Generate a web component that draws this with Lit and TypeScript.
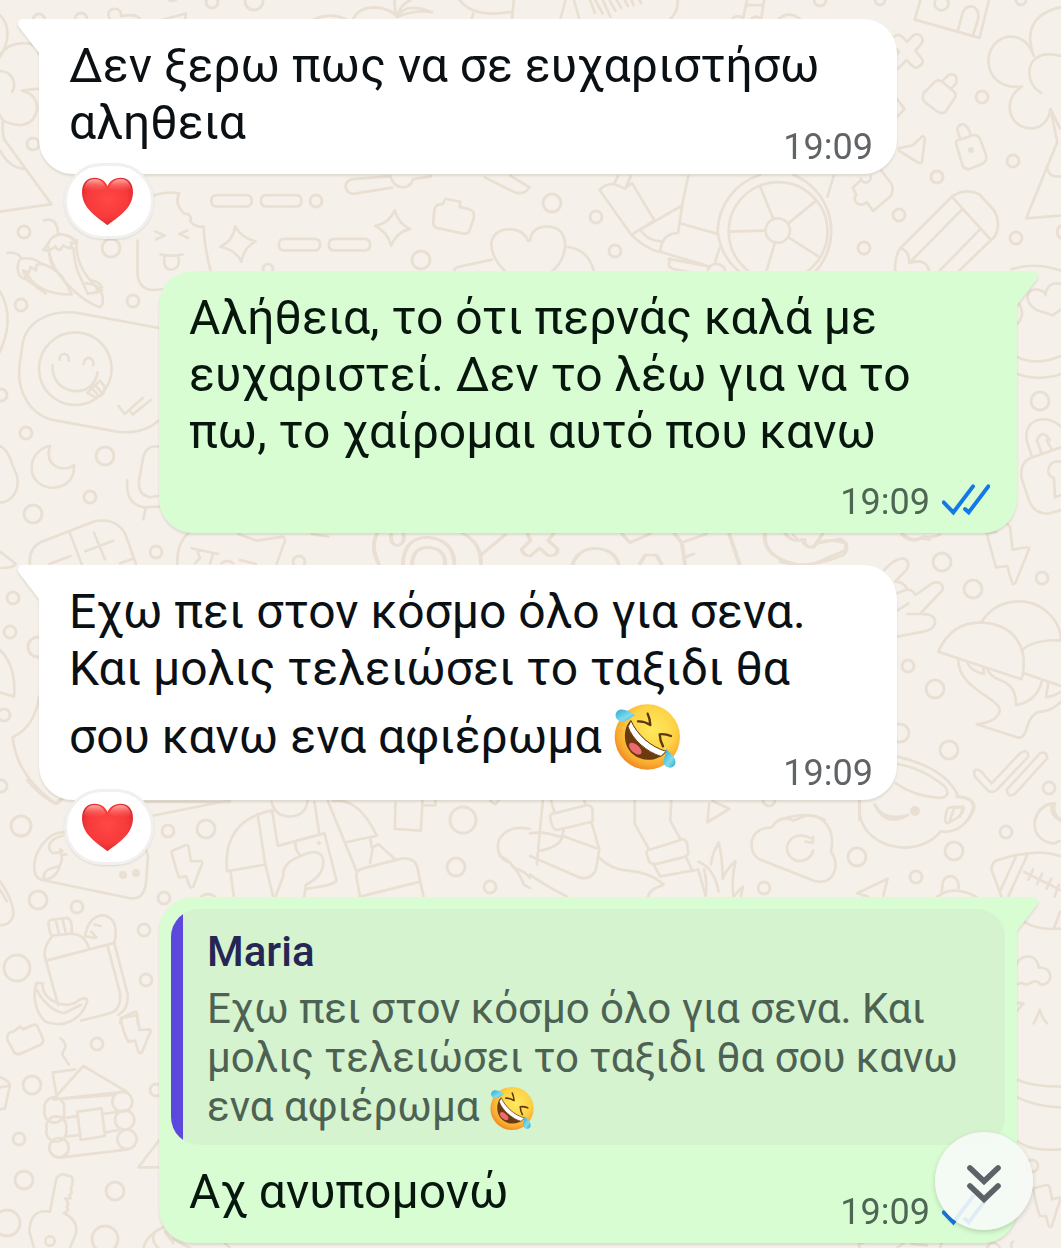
import { LitElement, html, css, svg, nothing } from "lit";
import { customElement, property } from "lit/decorators.js";

interface Quote {
  author: string;
  text: string;
  laughing?: boolean;
}

interface Message {
  own: boolean;
  text: string;
  time: string;
  laughing?: boolean;
  loved?: boolean;
  quote?: Quote;
}

const MESSAGES: Message[] = [
  { own: false, text: "Δεν ξερω πως να σε ευχαριστήσω αληθεια", time: "19:09", loved: true },
  {
    own: true,
    text: "Αλήθεια, το ότι περνάς καλά με ευχαριστεί. Δεν το λέω για να το πω, το χαίρομαι αυτό που κανω",
    time: "19:09",
  },
  {
    own: false,
    text: "Εχω πει στον κόσμο όλο για σενα. Και μολις τελειώσει το ταξιδι θα σου κανω ενα αφιέρωμα",
    laughing: true,
    time: "19:09",
    loved: true,
  },
  {
    own: true,
    text: "Αχ ανυπομονώ",
    time: "19:09",
    quote: {
      author: "Maria",
      text: "Εχω πει στον κόσμο όλο για σενα. Και μολις τελειώσει το ταξιδι θα σου κανω ενα αφιέρωμα",
      laughing: true,
    },
  },
];

/* Small and large rings scattered over the wallpaper: x, y, radius. */
const RINGS: [number, number, number][] = [
  [212, 2, 6], [254, 1, 9], [39, 20, 6], [81, 19, 6], [33, 144, 6], [24, 232, 6], [111, 248, 9],
  [316, 201, 6], [421, 260, 9], [268, 269, 5], [552, 203, 9], [596, 217, 6], [615, 251, 6], [820, 0, 6],
  [880, 0, 5], [1021, 0, 5], [982, 97, 6], [1013, 161, 6], [937, 177, 6], [899, 215, 6], [864, 248, 6],
  [1016, 238, 6], [1064, 232, 7], [21, 305, 6], [133, 301, 6], [1, 395, 6], [26, 433, 6], [105, 456, 9],
  [90, 497, 6], [33, 514, 9], [156, 552, 6], [299, 562, 6], [1040, 401, 9], [942, 562, 9], [973, 589, 9],
  [1042, 578, 6], [908, 666, 6], [935, 689, 9], [900, 733, 9], [949, 750, 9], [1049, 788, 6],
  [13, 598, 6], [10, 632, 6], [38, 647, 10], [4, 715, 6], [1, 786, 6], [21, 826, 10], [168, 831, 6],
  [206, 829, 9], [38, 900, 9], [77, 907, 6], [164, 898, 6], [208, 903, 9], [144, 930, 6], [17, 968, 13],
  [146, 980, 6], [463, 820, 13], [456, 867, 9], [490, 887, 6], [769, 800, 6], [857, 857, 9],
  [954, 851, 9], [764, 888, 6], [916, 877, 6], [1006, 832, 6], [97, 1044, 6], [32, 1085, 9],
  [156, 1090, 6], [19, 1139, 6], [24, 1180, 9], [115, 1191, 9], [7, 1223, 13], [105, 1239, 13],
  [1032, 1166, 6],
];

/* Line drawings, grouped by the patch of wallpaper that they decorate. */
const DOODLES: { at: string; d: string[] }[] = [
  {
    at: "scale(.338)",
    d: [
      "M0 45Q22 65 22 100T0 168M0 160Q30 125 75 128Q112 130 116 160M0 210Q38 212 42 250Q42 265 36 272M65 268L116 262",
      "M65 268Q108 278 110 320Q104 366 60 370Q5 366 0 340M8 360Q6 390 12 412L152 604L0 626M0 445Q26 496 72 500",
      "M325 57Q312 30 338 26Q360 26 358 48Q405 38 415 57M485 57L550 40L548 57M500 0Q510 5 520 0",
      "M930 57Q975 35 1025 57M1045 57Q1060 22 1110 22Q1155 25 1175 50Q1182 15 1215 0M1175 50Q1165 25 1168 0M1175 50Q1200 5 1278 36Q1230 28 1175 50M1360 0Q1400 55 1515 35M1520 0L1515 57M1400 40L1395 57",
      "M625 594Q625 577 642 577H728Q745 577 745 594T728 611H642Q625 611 625 594ZM772 594Q772 577 789 577H875Q892 577 892 594T875 611H789Q772 611 772 594Z",
      "M825 724Q825 707 842 707H930Q947 707 947 724T930 741H842Q825 741 825 724ZM973 724Q973 707 990 707H1078Q1095 707 1095 724T1078 741H990Q973 741 973 724Z",
      "M696 670Q715 705 756 714Q722 732 714 774Q697 738 652 730Q690 712 696 670ZM1168 622Q1178 662 1214 678Q1176 684 1157 726Q1146 686 1110 668Q1150 662 1168 622Z",
      "M1285 620Q1290 602 1310 604L1318 588L1362 597L1360 612L1390 620Q1405 625 1402 645L1390 680Q1386 694 1370 691L1295 675Q1280 672 1282 655Z",
      "M1023 555Q1020 536 1042 530L1155 522Q1165 555 1195 554Q1218 550 1222 530L1275 522M1023 555Q1028 575 1050 573L1160 555M1435 525L1525 570Q1550 575 1562 560M1510 520L1568 555",
      "M455 578Q495 565 530 572Q515 605 545 632Q570 632 563 655Q580 675 602 670Q605 735 625 808M407 712V810Q410 858 455 858L490 855M460 685L487 697L462 708M554 682L530 692L556 704M475 753Q510 760 540 753M486 756V780Q490 798 508 798Q528 795 529 775V756",
      "M130 652Q170 640 172 695Q150 700 143 720L128 740Q150 745 163 728Q170 742 180 738L187 726Q200 735 212 734L210 718L226 720Q215 695 172 692M145 740Q145 790 185 820L212 870M218 735Q220 790 240 825L260 870M22 748Q55 745 62 765Q98 760 122 780L108 784L106 800L90 790L86 806L68 800L80 828Q48 820 53 785Q55 770 62 765M122 780Q160 790 185 820M80 828L135 868M255 838Q290 842 302 860M265 868Q290 865 302 860",
      "M1500 808Q1450 760 1454 718Q1460 680 1508 678Q1550 680 1562 712M1455 768L1355 790Q1335 798 1352 808",
    ],
  },
  {
    at: "translate(530 0) scale(.338)",
    d: [
      "M105 0L90 57M130 0L146 57M178 0L192 38M193 0L215 40M215 0L238 50M235 0L253 32M256 0L270 24M280 0L290 18M300 0L306 15M324 0L329 10M437 0Q440 30 415 57M642 0L630 57M693 0L684 57M638 15H690M598 57Q605 44 626 50M655 55Q668 44 680 55M735 57Q765 30 800 57",
      "M1155 0L1138 58L1330 112L1358 0M1197 10A20 20 0 1 0 1238 10A20 20 0 1 0 1197 10M1265 94L1280 38Q1290 14 1312 20Q1330 30 1326 55L1312 100",
      "M1078 108Q1088 98 1100 108L1116 124L1132 106Q1145 96 1156 106Q1168 118 1156 132L1140 150L1158 172Q1168 184 1154 194Q1142 206 1130 194L1114 178L1090 202M1086 146L1092 152L1086 160",
      "M1165 275L1200 240Q1210 235 1220 242L1255 272Q1264 282 1255 292L1230 330Q1220 338 1208 332L1168 302Q1158 290 1165 275ZM1220 240L1236 224Q1250 214 1260 226Q1266 240 1258 250L1246 262M1084 290L1108 322L1086 346",
      "M1092 438L1132 430L1160 404Q1168 402 1168 412L1160 478Q1155 486 1146 480L1092 446ZM1262 430Q1255 415 1275 412L1310 400Q1325 397 1332 412L1350 462Q1352 480 1335 486L1300 500Q1285 502 1280 490ZM1272 410L1264 382Q1268 366 1284 368Q1298 375 1304 400",
      "M1490 165Q1480 130 1450 114C1400 95 1356 130 1356 184C1360 235 1400 262 1455 256M1455 256Q1405 290 1425 345C1450 395 1530 395 1540 322L1568 380M1490 165Q1450 50 1568 22M1512 275C1470 250 1462 185 1510 165Q1530 155 1568 165M1540 322L1560 420L1468 646L1568 638M1530 490Q1530 525 1568 522",
      "M206 562Q225 542 252 545L280 558L302 542L368 652L300 695ZM250 540L260 522M285 550L298 522M325 680L450 608M468 522L450 608L438 690Q390 690 385 745L520 785M300 695Q350 740 385 745M330 685Q350 712 388 714M448 662L555 692M560 735L548 775M416 765Q402 790 425 796L485 808M410 766L530 788M525 808Q525 785 550 780Q580 785 578 808",
      "M555 684A178 178 0 0 1 680 518M780 518A178 178 0 0 1 840 808M625 808A178 178 0 0 1 555 684M588 685A146 146 0 1 1 880 685A146 146 0 1 1 588 685M697 682A36 36 0 1 1 769 682A36 36 0 1 1 697 682M680 550L720 648M845 595L765 660M588 685L697 682M765 702L855 760M725 716L698 808M898 522L880 582",
      "M978 528Q982 542 998 540Q1010 532 1008 522M1040 505L1070 545Q1080 575 1055 590L1015 624L996 598Q985 610 968 602Q955 590 965 576L955 555L978 534",
      "M1095 735L1248 582Q1290 555 1330 575L1375 625Q1395 665 1375 700L1262 808M1248 582L1362 708M1280 618L1125 775M1330 680L1205 808M1095 735Q1078 760 1080 808M1095 735Q1122 740 1122 778Q1175 760 1182 808",
      "M0 712Q5 672 50 670Q105 672 104 730Q100 775 60 808M104 730Q175 735 190 808",
    ],
  },
  {
    at: "translate(860 0) scale(.3333)",
    d: [
      "M455 808Q525 785 603 812M578 946L530 930C485 905 500 855 545 872Q558 878 556 886C560 855 580 845 603 852M578 946L603 928M472 905Q500 940 472 972M472 1072Q530 1098 603 1068M472 1122Q540 1145 603 1122M500 1320C490 1255 560 1240 603 1280M532 1320Q545 1285 570 1320",
    ],
  },
  {
    at: "translate(0 240) scale(.3333)",
    d: [
      "M478 264L240 220C150 205 80 245 68 310L58 380C50 460 95 530 170 542L350 575Q430 585 478 540M117 386A108 108 0 1 1 335 386A108 108 0 1 1 117 386M178 360Q180 340 195 342Q208 345 206 362M250 372Q255 352 270 354Q282 360 280 376M158 375C150 465 280 485 293 396M262 458L300 422L314 440Q315 470 285 472ZM275 445L292 462M285 436L302 454M356 498L374 522L428 474M392 516L398 524L452 480",
      "M150 618C80 630 70 740 160 744Q225 735 222 675Q205 690 175 683Q135 665 150 618ZM0 155Q40 220 10 310L0 335M0 618Q25 630 35 670L50 705Q60 740 38 770Q20 788 0 788",
      "M475 620Q440 615 430 650L418 715Q410 765 450 772L475 768M382 720Q375 790 430 802L478 800M437 805L430 838M90 972Q85 925 125 905L280 845Q345 830 375 880L408 972M208 875L245 972M256 934L340 902M282 878L315 958M148 972L212 948M360 970L395 958",
      "M145 20Q150 80 200 130Q250 185 300 202Q315 190 305 160L262 110Q225 60 230 0M80 100Q115 165 215 163M270 120Q300 125 306 142L290 150M0 935L48 972Q40 984 0 984",
      "M565 880Q530 910 532 972M715 882L770 902L850 890Q860 900 850 915L830 972M575 925L655 942M590 928L600 955L585 970M640 940L630 970M665 970Q680 955 700 970M720 960L768 972M935 882L985 890",
    ],
  },
  {
    at: "translate(130 520) scale(.51 .333)",
    d: [
      "M485 40Q470 80 488 132M512 42Q510 75 525 77Q540 70 536 42M535 132Q538 50 585 52Q635 60 636 132M553 132Q555 82 585 82Q618 85 618 132M652 40Q690 70 688 132M735 45L690 103M780 42L785 62L768 88Q772 110 785 108L803 84L820 107Q840 110 838 86L820 62L830 42M868 132Q880 85 912 85Q950 88 958 132M965 42L980 68L1020 42M1000 132L1010 105H1032L1042 132M1068 42L1082 68L1130 42M1082 68L1088 132M1088 112L1105 102M1175 42L1195 132M1245 42Q1240 110 1305 132M1285 42Q1300 70 1318 58Q1325 85 1340 82L1358 42M1355 68L1392 56Q1410 70 1402 92L1340 132M1515 42Q1530 65 1550 55L1568 58",
    ],
  },
  {
    at: "translate(780 440) scale(.3333)",
    d: [
      "M740 0L755 48M770 0L785 40M800 0L815 28M843 22L750 55Q718 70 725 115L745 175Q760 225 810 220L843 210M843 65Q808 60 805 92Q805 108 822 115L825 172L843 165",
      "M620 280L648 382L682 378Q688 405 698 432Q708 432 712 415L748 325Q745 318 698 330L690 260L680 250M620 280L650 275",
      "M312 390Q345 355 370 355Q395 365 378 392L345 425Q372 425 382 448Q400 450 406 465L460 428Q490 422 488 450L420 522Q468 520 465 550Q460 570 430 575L352 590M382 522H420M352 460L382 448M352 512L385 490",
      "M475 635Q515 545 605 548C700 552 750 620 725 718L475 635M605 545Q650 478 735 485C800 495 843 550 843 600M725 630Q770 595 843 602M732 700L843 738M535 660C535 760 700 780 650 830Q640 845 590 853L715 893Q732 895 740 865Q755 815 785 815Q820 810 843 785M562 668Q575 695 612 702L610 685M622 688Q630 710 665 722Q710 740 708 795Q770 785 785 725M805 730L798 772Q820 770 843 755",
      "M585 990Q600 985 615 1008L635 1030L720 940Q745 925 745 950L650 1050Q635 1062 622 1050L585 1010Q580 1000 585 990ZM780 940Q800 932 802 955L705 1062Q685 1075 680 1050Z",
      "M352 950Q500 985 535 1070Q590 1075 582 1110L565 1140M352 972Q430 985 495 1040Q515 1070 480 1074Q400 1068 348 1030M238 1080V1140M285 1095Q310 1145 385 1125M510 1140L522 1104L550 1100L540 1130M0 365Q80 390 190 345Q210 330 195 310Q160 295 125 305M40 285Q60 310 75 298M75 298Q75 325 95 320Q120 315 120 290M365 283Q395 315 430 290Q460 295 480 283M765 1140Q780 1090 825 1090Q815 1120 843 1140M0 1140Q80 1110 135 1140",
    ],
  },
  {
    at: "translate(0 550) scale(.3333)",
    d: ["M0 300Q50 350 42 440L0 428M117 440Q105 530 38 562Q50 680 170 762L190 745"],
  },
  {
    at: "translate(0 780) scale(.338)",
    d: [
      "M455 105L680 60M430 65H680M190 155C140 150 95 220 102 268Q105 295 135 298L385 350Q425 355 432 305L438 225L425 180M130 296Q125 270 150 262L175 255Q190 230 178 212Q150 225 145 200Q145 175 185 165M130 296Q170 290 178 250M178 205L185 210M182 222L196 220",
      "M508 210L548 193Q558 190 558 200L565 240L596 240Q602 245 592 262L572 315Q565 322 560 312L550 285L530 288Q520 265 508 215Z",
      "M672 270C662 180 700 110 805 90M672 270L785 250M682 270L692 348M762 100L785 250L808 345M803 65Q815 110 860 108Q905 105 910 62M805 90L822 195L960 158M930 65L945 160M875 180Q870 205 890 225Q940 200 955 230Q965 280 905 310L900 345M960 158L995 295Q1000 310 905 322M875 180L960 158M890 225Q835 245 838 285L815 345M970 62L1055 270M985 62Q1060 50 1115 165L1020 185M1115 165L1095 170L1100 200L1120 190L1170 235M1095 245L1102 205M1065 345L1055 290Q1050 265 1080 260L1190 232Q1230 230 1235 260L1253 345M1065 345L1238 302",
      "M1170 68L1168 145L1245 150L1250 62M1250 75L1288 75V62M1450 62L1466 72L1475 62M1568 145Q1500 130 1475 180Q1465 230 1510 245Q1540 280 1550 310L1568 320M1478 225Q1500 230 1520 260Q1555 270 1568 290",
      "M145 430Q138 418 152 414L200 408Q210 412 212 430V445Q215 455 200 456L155 460Q145 455 145 430ZM165 414L175 458M185 410L195 455M155 462Q130 490 132 520L172 665M210 455Q250 455 262 495M135 535L338 482M338 482Q355 410 305 400Q260 405 252 462Q285 470 285 466M270 448L285 466M280 428L298 432M318 490L355 630Q360 680 325 690L240 712M338 482L378 635Q380 680 350 695M108 600L128 602Q120 625 150 650Q200 680 235 650Q258 640 258 655C240 710 190 735 135 715C105 690 95 640 108 600ZM108 620Q140 680 190 690L240 665",
      "M0 300Q40 355 40 400Q30 430 0 430M0 325L20 358M80 0Q120 50 165 70L185 50M355 720L360 705L405 695L408 720",
    ],
  },
  {
    at: "translate(530 780) scale(.338)",
    d: [
      "M38 60L20 250M62 60L72 95M160 60L165 75M60 110Q55 100 75 98L170 74Q185 75 185 95V115Q190 125 165 128L80 148Q65 148 60 110ZM100 148L95 165L205 205M182 125L205 205L195 265Q180 298 145 288L0 225M0 158Q40 150 95 170Q85 200 25 210M0 280Q40 310 110 345M205 230Q240 265 290 268Q360 275 395 310Q350 325 350 345",
      "M310 60V130L352 205M418 60L415 120L445 175M345 218Q340 208 358 205L450 176Q462 175 465 190L468 215Q470 222 455 228L375 248Q358 252 352 240ZM368 255L385 285L498 265L520 345M462 228L480 268",
      "M498 242Q545 260 558 330M515 265Q525 300 520 345M535 250Q540 215 558 185Q570 230 570 292Q580 265 608 240Q595 300 602 345M602 345L630 315L624 345M540 62L590 85L525 125L530 70",
      "M715 140C640 140 645 220 680 235L840 298C900 315 920 250 890 212C905 150 870 100 815 105L780 120Q740 100 715 140ZM830 172C770 140 730 215 790 240Q830 240 838 208M815 182L836 186L838 168",
      "M975 60C965 150 1030 200 1115 200Q1180 195 1215 152C1270 160 1300 120 1312 80Q1308 50 1262 50M1020 72Q1050 140 1115 105M1235 85Q1250 75 1282 82Q1285 105 1235 128Q1222 125 1235 85",
      "M1545 70C1480 80 1470 180 1550 188L1568 180M1545 70Q1535 100 1568 120M968 335L1058 292L1045 345M968 335L1000 345M1218 330L1222 300Q1230 282 1250 285Q1270 295 1268 320M1205 345Q1250 310 1320 345",
      "M1395 345L1365 265Q1365 240 1390 235Q1500 200 1568 225M1440 222L1390 330M1472 220L1415 345M1462 272L1568 325M1488 265L1475 295M1515 278L1500 308M1542 292L1528 322M1565 310L1552 345M1462 420Q1500 445 1568 440M1568 390L1552 435",
      "M1440 545C1450 515 1500 510 1505 555C1550 550 1550 610 1510 605Q1500 590 1482 600Q1465 610 1455 600L1440 605M1440 660H1460L1442 682M1508 680Q1515 705 1530 720M1508 680Q1500 705 1490 720",
    ],
  },
  {
    at: "translate(0 980) scale(.3333)",
    d: [
      "M22 180Q20 155 40 155L60 140L70 148L98 135Q110 130 115 145L130 180Q130 190 120 195L60 222Q45 225 40 212ZM362 115L400 97Q412 92 412 105L418 150L450 148Q455 155 445 170L425 218Q418 222 414 212L405 182L385 185Q370 160 362 115Z",
      "M182 175Q200 190 195 205Q180 225 195 235L206 254M158 278L225 268M158 278L168 340M160 358L250 258L380 335ZM160 358L340 345M134 390A30 30 0 1 1 192 390A30 30 0 1 1 134 390M140 447A30 30 0 1 1 198 447A30 30 0 1 1 140 447M148 503A29 29 0 1 1 206 503A29 29 0 1 1 148 503M337 365A30 30 0 1 1 397 365A30 30 0 1 1 337 365M345 420A29 29 0 1 1 403 420A29 29 0 1 1 345 420M352 478A29 29 0 1 1 410 478A29 29 0 1 1 352 478M232 395L305 385L315 468L242 480ZM185 415L232 408M308 402L350 396M195 470L242 465M315 458L355 450M180 533L385 508",
      "M0 292Q25 300 30 315L15 385L0 388M0 322L25 318M478 480L415 562H478",
      "M150 695L168 600Q175 580 195 584L215 590Q222 600 212 630Q220 640 208 645L212 655L195 655Q210 670 200 680L205 690L192 700Q235 720 228 760L210 804M150 695Q90 685 88 755L102 804M136 783A14 14 0 1 1 164 783A14 14 0 1 1 136 783M430 804Q440 765 490 742M465 755Q450 780 475 804M495 755L520 790M515 775L570 804M675 790L690 804",
    ],
  },
  {
    at: "translate(820 1080) scale(.3333)",
    d: [
      "M592 0Q640 20 723 20M592 52Q650 80 723 82M592 182Q630 215 723 208M640 325L680 315Q688 315 690 325L696 358L720 352Q723 360 712 385L695 440Q690 445 685 435L678 408L660 408Q650 385 640 328ZM120 504Q110 490 130 488M230 504L250 490M275 492L320 496M360 504L365 490M500 504L510 490Q530 485 540 504M575 504Q570 490 580 485",
    ],
  },
];

const heart = html`
  <svg class="heart" viewBox="243 536 150 144" role="img" aria-label="❤️">
    <defs>
      <radialGradient id="hg" cx="50%" cy="45%" r="65%">
        <stop offset="0" stop-color="#ff4844" />
        <stop offset=".6" stop-color="#f73a3b" />
        <stop offset="1" stop-color="#cf2029" />
      </radialGradient>
      <linearGradient id="hs" x1="0" y1="0" x2="0" y2="1">
        <stop offset="0" stop-color="#ffb0a8" />
        <stop offset="1" stop-color="#ff5a55" stop-opacity="0" />
      </linearGradient>
    </defs>
    <path fill="url(#hg)" d="M318 678C290 655 243 630 243 580C243 550 262 538 280 538C300 538 313 550 318 563C323 550 336 538 357 538C375 538 393 550 393 580C393 630 346 655 318 678Z" />
    <path fill="url(#hs)" d="M249 572C252 550 265 542 281 542C298 542 308 553 313 568C295 580 265 584 249 572ZM387 572C384 550 371 542 356 542C339 542 328 553 323 568C341 580 371 584 387 572Z" />
  </svg>
`;

const laughing = html`
  <svg class="laughing" viewBox="105 68 204 204" role="img" aria-label="🤣">
    <defs>
      <radialGradient id="fg" cx="58%" cy="38%" r="64%">
        <stop offset="0" stop-color="#ffe95c" />
        <stop offset=".55" stop-color="#fdd246" />
        <stop offset=".85" stop-color="#f9a82f" />
        <stop offset="1" stop-color="#ef8a22" />
      </radialGradient>
      <linearGradient id="tg" x1="0" y1="0" x2="1" y2="1">
        <stop offset="0" stop-color="#2fa9cf" />
        <stop offset=".6" stop-color="#7fdcee" />
        <stop offset="1" stop-color="#2ba3cc" />
      </linearGradient>
    </defs>
    <circle cx="205" cy="170" r="98" fill="url(#fg)" />
    <path fill="#6b3a0f" d="M155 120C130 145 132 198 162 222C190 246 236 244 262 214C220 203 176 165 155 120Z" />
    <ellipse cx="169" cy="205" rx="23" ry="12" fill="#ee6a72" transform="rotate(42 169 205)" />
    <path fill="#fff" stroke="#6b3a0f" stroke-width="3" d="M156 121C174 163 215 200 262 213L246 228C205 216 160 178 147 139Z" />
    <g fill="none" stroke="#5d3610" stroke-width="7" stroke-linecap="round" stroke-linejoin="round">
      <path d="M177 123Q196 122 214 134Q213 115 206 100" />
      <path d="M276 167Q259 160 242 162Q243 182 252 198" />
    </g>
    <path fill="url(#tg)" d="M168 104C150 92 135 84 120 89C105 96 107 116 122 122C140 127 155 112 168 104Z" />
    <path fill="url(#tg)" d="M261 206C262 225 250 238 255 252C263 266 284 265 289 250C293 232 275 218 261 206Z" />
  </svg>
`;

const ticks = html`
  <svg class="ticks" viewBox="486 133 144 96" role="img" aria-label="Διαβάστηκε">
    <path d="M491 188L520 218L579 140M555 208L566 218L625 140" />
  </svg>
`;

@customElement("chat-wallpaper")
export class ChatWallpaper extends LitElement {
  static styles = css`
    :host {
      display: block;
      overflow: hidden;
    }
    .art {
      display: block;
      width: 100%;
      height: 100%;
      fill: none;
      stroke: #e9dfd3;
      stroke-linecap: round;
      stroke-linejoin: round;
    }
    .line {
      stroke-width: 8;
    }
    .ring {
      stroke-width: 3;
    }
    .dot {
      fill: #e9dfd3;
      stroke: none;
    }
  `;

  render() {
    return html`
      <svg class="art" viewBox="0 0 1061 1248" preserveAspectRatio="xMidYMin slice" aria-hidden="true">
        ${RINGS.map(([x, y, r]) => svg`<circle class="ring" cx=${x} cy=${y} r=${r} />`)}
        ${DOODLES.map(
          (g) => svg`<g class="line" transform=${g.at}>${g.d.map((d) => svg`<path d=${d} />`)}</g>`,
        )}
        <circle class="dot" cx="971" cy="150" r="3" />
        <circle class="dot" cx="915" cy="811" r="5" />
        <circle class="dot" cx="123" cy="875" r="4" />
        <circle class="dot" cx="136" cy="873" r="4" />
        <circle class="dot" cx="319" cy="843" r="2" />
      </svg>
    `;
  }
}

@customElement("chat-message")
export class ChatMessage extends LitElement {
  @property({ attribute: false }) message!: Message;

  static styles = css`
    :host {
      display: block;
    }
    .row {
      margin-right: 120px;
    }
    .row.own {
      margin-right: 0;
      margin-left: 120px;
    }
    .bubble {
      position: relative;
      display: grid;
      background: #fff;
      border-radius: 0 34px 34px 34px;
      color: #0b1014;
      filter: drop-shadow(0 2px 1px rgba(60, 45, 20, 0.12));
    }
    .own .bubble {
      background: #d8fdd2;
      border-radius: 34px 0 34px 34px;
      color: #07170e;
    }
    .tail {
      position: absolute;
      top: 0;
      left: -21px;
      width: 22px;
      height: 36px;
      fill: #fff;
    }
    .own .tail {
      left: auto;
      right: -21px;
      fill: #d8fdd2;
      transform: scaleX(-1);
    }
    .text {
      grid-area: 2 / 1;
      margin: 0;
      padding: 18px 30px 23px;
      font-size: 48px;
      line-height: 57px;
    }
    /* Keeps the last line of text clear of the time beside it. */
    .text::after {
      content: "";
      display: inline-block;
      width: 90px;
    }
    .spaced .text {
      padding-bottom: 73px;
    }
    .spaced .text::after {
      display: none;
    }
    .laughing {
      width: 68px;
      height: 68px;
      margin: 6px 0;
      vertical-align: -24px;
    }
    .meta {
      grid-area: 2 / 1;
      align-self: end;
      justify-self: end;
      display: flex;
      align-items: center;
      gap: 12px;
      padding: 0 24px 6px;
      font-size: 36px;
      line-height: 42px;
      color: #606466;
    }
    .own .meta {
      padding: 0 27px 10px;
      color: #4f6655;
    }
    .ticks {
      width: 48px;
      height: 32px;
      margin-bottom: 4px;
      fill: none;
      stroke: #1379e8;
      stroke-width: 12;
      stroke-linecap: round;
      stroke-linejoin: miter;
    }
    .quote {
      grid-area: 1 / 1;
      margin: 12px 12px 0;
      padding: 18px 24px 14px 36px;
      border-radius: 28px;
      background: linear-gradient(to right, #5d48dd 12px, #d5f3cf 12px);
      font-size: 42px;
      line-height: 49px;
      color: #4d6253;
    }
    .author {
      display: block;
      margin-bottom: 8px;
      font-weight: 500;
      color: #262654;
    }
    .quote .laughing {
      width: 45px;
      height: 45px;
      margin: 0;
      vertical-align: -10px;
    }
    .quoted {
      margin: 0;
    }
    .reaction {
      position: relative;
      display: flex;
      align-items: center;
      justify-content: center;
      box-sizing: border-box;
      width: 90px;
      height: 76px;
      margin: -11px 0 0 25px;
      padding-right: 3px;
      border: 3px solid #f1f0ee;
      border-radius: 38px;
      background: #fff;
      box-shadow: 0 1px 2px rgba(60, 45, 20, 0.12);
    }
    .heart {
      width: 51px;
      height: 49px;
    }
  `;

  render() {
    const m = this.message;
    const spaced = m.own && !m.quote;
    return html`
      <article class="row ${m.own ? "own" : ""} ${spaced ? "spaced" : ""}">
        <div class="bubble">
          <svg class="tail" viewBox="0 0 22 36" aria-hidden="true">
            <path d="M22 0H4Q-2 2 1 8L21 34V36H22Z" />
          </svg>
          ${m.quote
            ? html`<blockquote class="quote">
                <span class="author">${m.quote.author}</span>
                <p class="quoted">${m.quote.text} ${m.quote.laughing ? laughing : nothing}</p>
              </blockquote>`
            : nothing}
          <p class="text">${m.text} ${m.laughing ? laughing : nothing}</p>
          <div class="meta"><time>${m.time}</time>${m.own ? ticks : nothing}</div>
        </div>
        ${m.loved ? html`<div class="reaction">${heart}</div>` : nothing}
      </article>
    `;
  }
}

@customElement("app-root")
export class AppRoot extends LitElement {
  static styles = css`
    :host {
      display: block;
      position: relative;
      box-sizing: border-box;
      min-height: 100vh;
      overflow: hidden;
      background: #f5f1ea;
      font-family: Roboto, "Noto Sans", sans-serif;
    }
    .wallpaper {
      position: absolute;
      inset: 0;
    }
    .thread {
      position: relative;
      display: flex;
      flex-direction: column;
      gap: 32px;
      padding: 19px 44px 5px 39px;
    }
    .jump {
      position: absolute;
      right: 28px;
      bottom: 18px;
      width: 98px;
      height: 98px;
      padding: 0;
      border: 0;
      border-radius: 50%;
      background: rgba(247, 250, 247, 0.9);
      box-shadow: 0 2px 5px rgba(40, 40, 30, 0.2);
      cursor: pointer;
    }
    .chevrons {
      display: block;
      width: 98px;
      height: 98px;
      fill: none;
      stroke: #5b6268;
      stroke-width: 17;
      stroke-linecap: round;
      stroke-linejoin: miter;
    }
  `;

  render() {
    return html`
      <chat-wallpaper class="wallpaper"></chat-wallpaper>
      <main class="thread" lang="el">
        ${MESSAGES.map((m) => html`<chat-message .message=${m}></chat-message>`)}
      </main>
      <button class="jump" type="button" aria-label="Μετάβαση στο τέλος">
        <svg class="chevrons" viewBox="345 155 294 294" aria-hidden="true">
          <path d="M450 263L492 303L534 263M450 317L492 357L534 317" />
        </svg>
      </button>
    `;
  }
}
